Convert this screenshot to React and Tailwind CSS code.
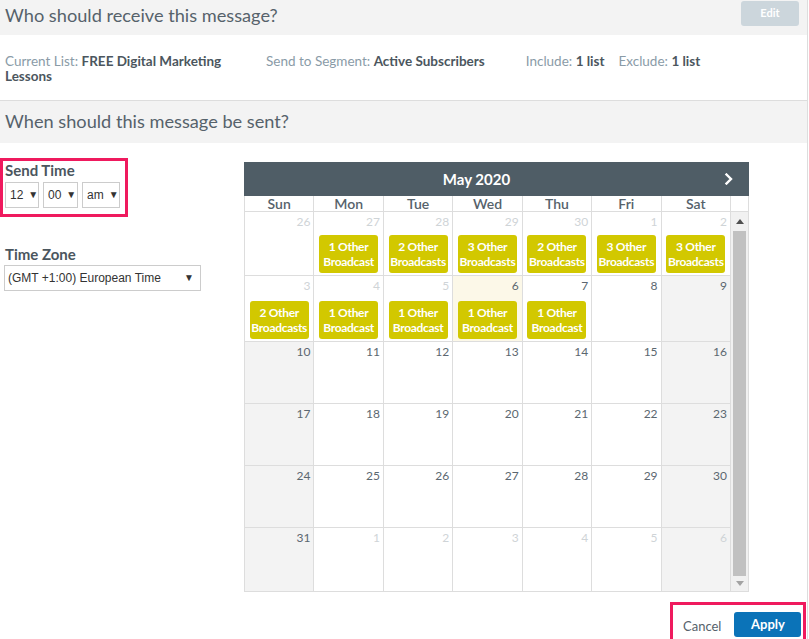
import React from "react";

const sans = { fontFamily: "Lato, 'Noto Sans', sans-serif" };

const weeks = [
  {
    h: "h-[64px]",
    days: [
      { n: 26, other: true, bg: "bg-white" },
      { n: 27, other: true, bg: "bg-white", badge: ["1 Other", "Broadcast"] },
      { n: 28, other: true, bg: "bg-white", badge: ["2 Other", "Broadcasts"] },
      { n: 29, other: true, bg: "bg-white", badge: ["3 Other", "Broadcasts"] },
      { n: 30, other: true, bg: "bg-white", badge: ["2 Other", "Broadcasts"] },
      { n: 1, other: true, bg: "bg-white", badge: ["3 Other", "Broadcasts"] },
      { n: 2, other: true, bg: "bg-white", badge: ["3 Other", "Broadcasts"] },
    ],
  },
  {
    h: "h-[66px]",
    days: [
      { n: 3, other: true, bg: "bg-white", badge: ["2 Other", "Broadcasts"] },
      { n: 4, other: true, bg: "bg-white", badge: ["1 Other", "Broadcast"] },
      { n: 5, other: true, bg: "bg-white", badge: ["1 Other", "Broadcast"] },
      { n: 6, bg: "bg-[#fcf8e8]", badge: ["1 Other", "Broadcast"] },
      { n: 7, bg: "bg-white", badge: ["1 Other", "Broadcast"] },
      { n: 8, bg: "bg-white" },
      { n: 9, bg: "bg-[#f3f3f3]" },
    ],
  },
  { h: "h-[62px]", start: 10 },
  { h: "h-[62px]", start: 17 },
  { h: "h-[62px]", start: 24 },
  {
    h: "h-[63px]",
    days: [
      { n: 31, bg: "bg-[#f3f3f3]" },
      { n: 1, other: true, bg: "bg-white" },
      { n: 2, other: true, bg: "bg-white" },
      { n: 3, other: true, bg: "bg-white" },
      { n: 4, other: true, bg: "bg-white" },
      { n: 5, other: true, bg: "bg-white" },
      { n: 6, other: true, bg: "bg-[#f3f3f3]" },
    ],
  },
];

function rowDays(w) {
  if (w.days) return w.days;
  return Array.from({ length: 7 }, (_, i) => ({
    n: w.start + i,
    bg: i === 0 || i === 6 ? "bg-[#f3f3f3]" : "bg-white",
  }));
}

function Caret() {
  return <span className="text-[10px] text-[#333] ml-[5px] leading-none">▼</span>;
}

function FakeSelect({ className, children }) {
  return (
    <div
      className={`h-[26px] border border-[#ccc] bg-white flex items-center justify-between px-[4px] text-[12px] text-[#333] ${className}`}
      style={{ fontFamily: "'Liberation Sans', Arial, sans-serif" }}
    >
      <span>{children}</span>
      <Caret />
    </div>
  );
}

export default function App() {
  const dayNames = ["Sun", "Mon", "Tue", "Wed", "Thu", "Fri", "Sat"];
  return (
    <div
      className="w-[808px] h-[639px] overflow-hidden bg-white border-r border-[#ddd] flex flex-col"
      style={sans}
    >
      {/* audience header */}
      <div className="h-[35px] bg-[#f3f3f3] flex items-start justify-between shrink-0">
        <div className="pl-[5px] pt-[3px] text-[18.2px] leading-[24px] text-[#56626b]">
          Who should receive this message?
        </div>
        <div className="mt-px mr-[8px] w-[58px] h-[25px] rounded-[3px] bg-[#ccd6dc] text-white text-[11px] font-bold flex items-center justify-center">
          Edit
        </div>
      </div>

      {/* audience summary */}
      <div className="h-[66px] border-b border-[#ddd] flex items-start pl-[5px] pt-[19px] text-[13.5px] leading-[15px] shrink-0">
        <div className="w-[226px]">
          <span className="text-[#8a9ba7]">Current List: </span>
          <span className="font-bold text-[#4b565e]">FREE Digital Marketing Lessons</span>
        </div>
        <div className="ml-[35px]">
          <span className="text-[#8a9ba7]">Send to Segment: </span>
          <span className="font-bold text-[#4b565e]">Active Subscribers</span>
        </div>
        <div className="ml-[41px]">
          <span className="text-[#8a9ba7]">Include: </span>
          <span className="font-bold text-[#4b565e]">1 list</span>
        </div>
        <div className="ml-[14px]">
          <span className="text-[#8a9ba7]">Exclude: </span>
          <span className="font-bold text-[#4b565e]">1 list</span>
        </div>
      </div>

      {/* schedule header */}
      <div className="h-[42px] bg-[#f3f3f3] pl-[5px] pt-[8px] text-[18.2px] leading-[24px] text-[#56626b] shrink-0">
        When should this message be sent?
      </div>

      {/* schedule body */}
      <div className="flex flex-1 relative">
        <div className="w-[244px] shrink-0">
          <div className="mt-[15px] w-[128px] h-[59px] border-[3px] border-[#ef1a5e] pl-[2px]">
            <div className="text-[15px] font-bold leading-[18px] text-[#4b565e]">Send Time</div>
            <div className="flex gap-[4px] mt-[3px]">
              <FakeSelect className="w-[34px]">12</FakeSelect>
              <FakeSelect className="w-[35px]">00</FakeSelect>
              <FakeSelect className="w-[38px]">am</FakeSelect>
            </div>
          </div>
          <div className="mt-[28px] pl-[5px] text-[15px] font-bold leading-[18px] text-[#4b565e]">
            Time Zone
          </div>
          <div className="pl-[4px] mt-[2px]">
            <FakeSelect className="w-[197px] pl-[3px] pr-[6px]">(GMT +1:00) European Time</FakeSelect>
          </div>
        </div>

        {/* calendar */}
        <div className="w-[505px] mt-[19px] self-start">
          <div className="h-[34px] bg-[#4f5d66] flex items-center">
            <div className="flex-1 text-center text-white font-bold text-[15px]">May 2020</div>
            <div className="w-[40px] flex justify-center">
              <svg width="10" height="12" viewBox="0 0 10 12">
                <polyline
                  points="2.5,1.5 7,6 2.5,10.5"
                  fill="none"
                  stroke="white"
                  strokeWidth="2.4"
                  strokeLinecap="square"
                />
              </svg>
            </div>
          </div>
          <div className="border border-t-0 border-[#ddd]">
            <div className="flex h-[16px] border-b border-[#ddd]">
              <div className="grid grid-cols-7 flex-1">
                {dayNames.map((d) => (
                  <div
                    key={d}
                    className="border-r border-[#ddd] text-center text-[14px] leading-[15px] font-semibold text-[#56626b]"
                  >
                    {d}
                  </div>
                ))}
              </div>
              <div className="w-[17px]" />
            </div>
            <div className="flex h-[379px]">
              <div className="flex-1 flex flex-col">
                {weeks.map((w, wi) => (
                  <div key={wi} className={`grid grid-cols-7 ${w.h} border-b border-[#ddd] last:border-b-0`}>
                    {rowDays(w).map((d, di) => (
                      <div key={di} className={`${d.bg} border-r border-[#ddd] flex flex-col`}>
                        <div
                          className={`text-right pr-[3px] pt-[3px] text-[12px] leading-[14px] ${
                            d.other ? "text-[#cfd4d7]" : "text-[#5b6770]"
                          }`}
                        >
                          {d.n}
                        </div>
                        {d.badge && (
                          <div className="mt-auto mb-[2px] mx-auto w-[59px] h-[38px] rounded-[3px] bg-[#d2c800] text-white font-bold text-[12px] leading-[15px] flex flex-col items-center justify-center whitespace-nowrap tracking-[-0.3px]">
                            <span>{d.badge[0]}</span>
                            <span>{d.badge[1]}</span>
                          </div>
                        )}
                      </div>
                    ))}
                  </div>
                ))}
              </div>
              {/* scrollbar */}
              <div className="w-[17px] bg-[#f1f1f1] flex flex-col items-center">
                <div className="h-[19px] flex items-center justify-center">
                  <svg width="8" height="5" viewBox="0 0 8 5">
                    <polygon points="0,5 8,5 4,0" fill="#505050" />
                  </svg>
                </div>
                <div className="w-[13px] h-[345px] bg-[#c1c1c1]" />
                <div className="h-[15px] flex items-center justify-center">
                  <svg width="8" height="5" viewBox="0 0 8 5">
                    <polygon points="0,0 8,0 4,5" fill="#a3a3a3" />
                  </svg>
                </div>
              </div>
            </div>
          </div>
        </div>

        {/* actions */}
        <div className="absolute right-[1px] bottom-[-3px] w-[136px] h-[40px] border-[3px] border-[#ef1a5e] flex items-start pt-[7px] pl-[10px]">
          <div className="text-[13px] text-[#56626b] mt-[5px]">Cancel</div>
          <div className="ml-[13px] w-[67px] h-[25px] rounded-[3px] bg-[#0b73b8] text-white font-bold text-[13px] flex items-center justify-center">
            Apply
          </div>
        </div>
      </div>
    </div>
  );
}
